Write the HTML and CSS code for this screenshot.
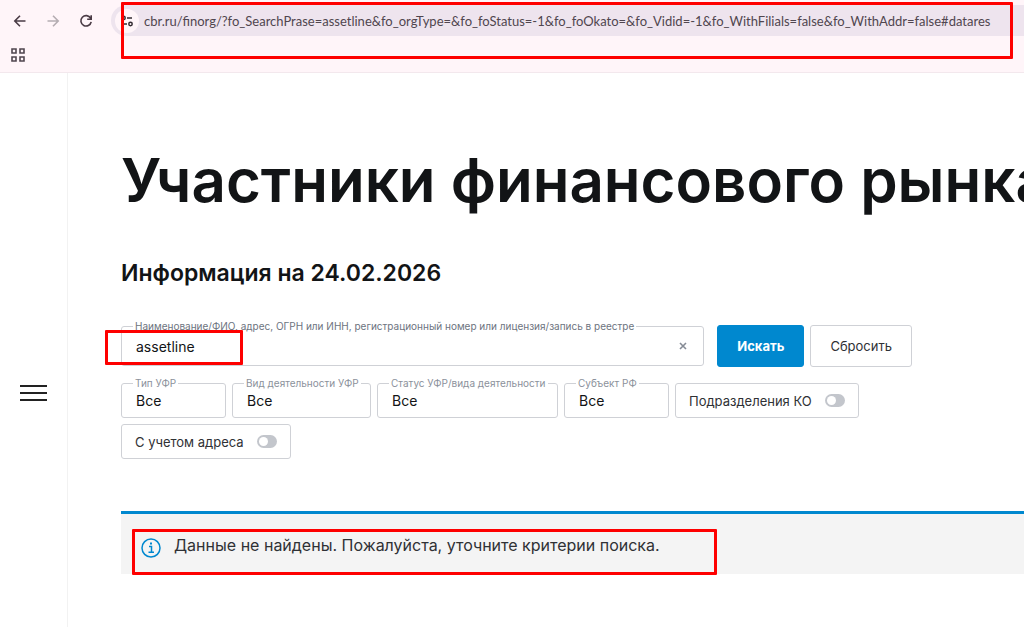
FILE: index.html
```
<!DOCTYPE html>
<html lang="ru">
<head>
    <meta charset="UTF-8">
    <title>Участники финансового рынка</title>
    <link rel="stylesheet" href="styles.css">
</head>
<body>
    <header class="browser">
        <div class="toolbar">
            <button type="button" class="nav-button" aria-label="Назад">
                <svg width="16" height="16" viewBox="0 0 16 16"><path d="M13.5 8H3M8 2.8 2.8 8 8 13.2"/></svg>
            </button>
            <button type="button" class="nav-button disabled" aria-label="Вперед">
                <svg width="16" height="16" viewBox="0 0 16 16"><path d="M2.5 8H13M8 2.8 13.2 8 8 13.2"/></svg>
            </button>
            <button type="button" class="nav-button" aria-label="Обновить">
                <svg width="16" height="16" viewBox="0 0 16 16"><path d="M12.6 5.2A5.2 5.2 0 1 0 13.2 8.8M13.2 2.2V6.2H9.2"/></svg>
            </button>
            <div class="address">
                <button type="button" class="site-info" aria-label="Сведения о сайте">
                    <svg width="14" height="14" viewBox="0 0 14 14"><circle cx="3.5" cy="4" r="1.7"/><path d="M7 4h5M2 10h5"/><circle cx="10.5" cy="10" r="1.7"/></svg>
                </button>
                <input class="url" type="text" aria-label="Адрес" value="cbr.ru/finorg/?fo_SearchPrase=assetline&amp;fo_orgType=&amp;fo_foStatus=-1&amp;fo_foOkato=&amp;fo_Vidid=-1&amp;fo_WithFilials=false&amp;fo_WithAddr=false#datares">
            </div>
        </div>
        <button type="button" class="apps" aria-label="Приложения">
            <svg width="14" height="14" viewBox="0 0 14 14"><path d="M1 1h4v4H1zM9 1h4v4H9zM1 9h4v4H1zM9 9h4v4H9z"/></svg>
        </button>
        <div class="mark mark-url"></div>
    </header>

    <div class="page">
        <aside class="sidebar">
            <button type="button" class="menu-button" aria-label="Меню">
                <span></span>
                <span></span>
                <span></span>
            </button>
        </aside>

        <main class="content">
            <h1>Участники финансового рынка</h1>
            <h2>Информация на 24.02.2026</h2>

            <form id="searchForm">
                <div class="search-row">
                    <div class="field search-field">
                        <label for="search">Наименование/ФИО, адрес, ОГРН или ИНН, регистрационный номер или лицензия/запись в реестре</label>
                        <input type="text" id="search" name="search" value="assetline">
                        <button type="button" class="clear" aria-label="Очистить">
                            <svg width="8" height="8" viewBox="0 0 8 8"><path d="M1 1l6 6M7 1 1 7"/></svg>
                        </button>
                        <div class="mark mark-search"></div>
                    </div>
                    <div class="buttons">
                        <button type="submit" class="button primary">Искать</button>
                        <button type="reset" class="button">Сбросить</button>
                    </div>
                </div>

                <div class="filters">
                    <div class="field">
                        <label for="orgType">Тип УФР</label>
                        <select id="orgType" class="small"><option>Все</option></select>
                    </div>
                    <div class="field">
                        <label for="activity">Вид деятельности УФР</label>
                        <select id="activity" class="medium"><option>Все</option></select>
                    </div>
                    <div class="field">
                        <label for="status">Статус УФР/вида деятельности</label>
                        <select id="status" class="large"><option>Все</option></select>
                    </div>
                    <div class="field">
                        <label for="region">Субъект РФ</label>
                        <select id="region" class="small"><option>Все</option></select>
                    </div>
                    <label class="toggle">Подразделения КО <input type="checkbox" name="filials"></label>
                    <label class="toggle">С учетом адреса <input type="checkbox" name="addr"></label>
                </div>
            </form>

            <div class="notice">
                <svg class="info" width="20" height="20" viewBox="0 0 20 20"><circle cx="10" cy="10" r="9"/><path d="M8 8.5h2.5V14M7.5 14.2h5.5"/><path class="dot" d="M9 4.5h2v2H9z"/></svg>
                <p>Данные не найдены. Пожалуйста, уточните критерии поиска.</p>
                <div class="mark mark-notice"></div>
            </div>
        </main>
    </div>
</body>
</html>
```
FILE: styles.css
```
* {
    box-sizing: border-box;
}

body {
    margin: 0;
    min-height: 100vh;
    display: flex;
    flex-direction: column;
    font-family: Inter, "Liberation Sans", sans-serif;
    font-size: 14px;
    color: #2f3135;
    background-color: #fff;
    overflow-x: hidden;
}

button,
input,
select {
    font: inherit;
    color: inherit;
}

button {
    padding: 0;
    border: none;
    background: none;
    cursor: pointer;
}

svg {
    display: block;
    fill: none;
    stroke: currentColor;
}

/* browser bar */
.browser {
    position: relative;
    height: 73px;
    padding-top: 5px;
    background-color: #fff5f9;
    border-bottom: 1px solid #f3e8ed;
}

.toolbar {
    display: flex;
    align-items: center;
    padding-left: 12px;
}

.nav-button {
    width: 16px;
    margin-right: 17px;
    color: #4a3b45;
    stroke-width: 1.6;
}

.nav-button.disabled {
    color: #b5adb2;
}

.address {
    flex: 1;
    display: flex;
    align-items: center;
    height: 31px;
    padding-left: 4px;
    border-radius: 16px 0 0 16px;
    background-color: #eee4ee;
}

.site-info {
    flex: none;
    display: flex;
    align-items: center;
    justify-content: center;
    width: 24px;
    height: 24px;
    border-radius: 50%;
    background-color: #fff5f9;
    color: #332b31;
    stroke-width: 1.5;
}

.url {
    flex: 1;
    min-width: 0;
    margin-left: 5px;
    padding: 0;
    border: none;
    outline: none;
    background: none;
    font-family: Lato, "Open Sans", sans-serif;
    font-size: 13px;
    color: #50464f;
}

.apps {
    display: block;
    margin: 12px 0 0 11px;
    color: #50464f;
    stroke-width: 1.6;
}

/* page */
.page {
    flex: 1;
    display: flex;
}

.sidebar {
    flex: none;
    width: 68px;
    padding: 312px 0 0 20px;
    border-right: 1px solid #f2f2f2;
}

.menu-button {
    display: flex;
    flex-direction: column;
    gap: 5px;
    width: 27px;
}

.menu-button span {
    width: 100%;
    height: 2px;
    background-color: #222;
}

.content {
    flex: 1;
    min-width: 0;
    padding: 71px 0 48px 53px;
}

h1 {
    margin: 0;
    font-size: 60px;
    line-height: 72px;
    font-weight: 600;
    color: #121416;
    white-space: nowrap;
}

h2 {
    margin: 42px 0 37px;
    font-size: 23px;
    line-height: 30px;
    font-weight: 600;
    color: #121416;
}

form {
    max-width: 791px;
}

.search-row {
    display: flex;
    align-items: center;
    gap: 13px;
}

.field {
    position: relative;
}

.search-field {
    flex: 1;
}

.field label {
    position: absolute;
    top: -7px;
    left: 12px;
    padding: 0 2px;
    font-size: 10px;
    line-height: 14px;
    color: #8b919b;
    background-color: #fff;
    white-space: nowrap;
}

.search-field label {
    color: #6d7480;
}

.field input,
.field select {
    display: block;
    padding: 0 14px;
    border: 1px solid #cfd1d6;
    border-radius: 3px;
    outline: none;
    background-color: #fff;
    color: #121416;
}

.field input {
    width: 100%;
    height: 40px;
}

.field select {
    appearance: none;
    height: 35px;
}

.small {
    width: 105px;
}

.medium {
    width: 139px;
}

.large {
    width: 181px;
}

.clear {
    position: absolute;
    top: 16px;
    right: 17px;
    color: #868c96;
    stroke-width: 1.6;
}

.buttons {
    display: flex;
    gap: 6px;
}

.button {
    height: 42px;
    padding: 0 19px;
    border: 1px solid #cfd1d6;
    border-radius: 3px;
    font-size: 13px;
}

.button.primary {
    border-color: #0088cf;
    background-color: #0088cf;
    color: #fff;
    font-weight: 700;
}

.filters {
    display: flex;
    flex-wrap: wrap;
    gap: 6px;
    margin-top: 16px;
}

.toggle {
    display: flex;
    align-items: center;
    gap: 13px;
    height: 35px;
    padding: 0 13px;
    border: 1px solid #cfd1d6;
    border-radius: 3px;
    font-size: 13px;
}

.toggle input {
    appearance: none;
    display: flex;
    align-items: center;
    width: 20px;
    height: 13px;
    margin: 0;
    padding: 0 2px;
    border-radius: 7px;
    background-color: #c3c6cc;
}

.toggle input::before {
    content: "";
    width: 9px;
    height: 9px;
    border-radius: 50%;
    background-color: #fff;
}

.toggle input:checked {
    justify-content: flex-end;
    background-color: #0088cf;
}

.notice {
    position: relative;
    display: flex;
    gap: 13px;
    margin-top: 52px;
    padding: 20px 20px 16px;
    border-top: 3px solid #0088cf;
    background-color: #f4f4f4;
}

.notice p {
    margin: 0;
    font-size: 16px;
    line-height: 22px;
}

.info {
    flex: none;
    margin-top: 4px;
    color: #0088cf;
    stroke-width: 1.5;
}

.info .dot {
    fill: currentColor;
    stroke: none;
}

/* red frames over the important places */
.mark {
    position: absolute;
    border: 3px solid #fe0000;
    border-radius: 1px;
    pointer-events: none;
}

.mark-url {
    top: 2px;
    left: 121px;
    right: 11px;
    height: 57px;
}

.mark-search {
    top: 4px;
    left: -16px;
    width: 138px;
    height: 35px;
}

.mark-notice {
    top: 15px;
    left: 11px;
    width: 585px;
    height: 46px;
}
```
